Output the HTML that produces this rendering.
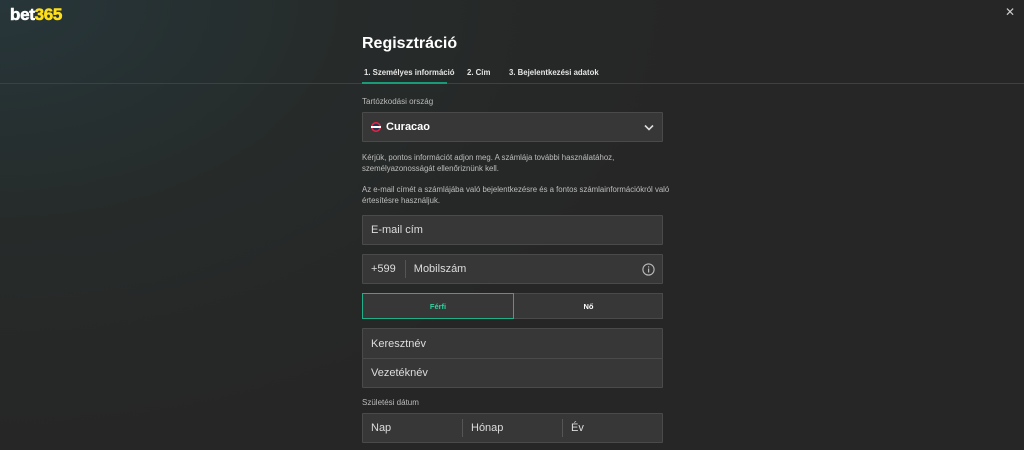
<!DOCTYPE html>
<html><head><meta charset="utf-8"><style>
*{box-sizing:border-box;margin:0;padding:0}
body{width:1024px;height:450px;overflow:hidden;font-family:"Liberation Sans",sans-serif;color:#fff;
background:radial-gradient(ellipse 700px 450px at 0 0,#27363a 0%,#262b2a 50%,#262626 100%);position:relative}
.abs{position:absolute}
.logo{left:10px;top:5px;font-size:17px;font-weight:900;letter-spacing:-0.3px;-webkit-text-stroke:0.6px currentColor}
.logo span{color:#ffdf1b}
.close{right:9px;top:5px;font-size:12px;color:#ccc}
.hline{left:0;right:0;top:83px;height:1px;background:#3c4240}
.title{left:362px;top:35px;font-size:16px;font-weight:bold}
.tab{top:68px;font-size:7.8px;font-weight:bold;color:#e5e5e5}
.ul{left:362px;top:82px;width:85px;height:2px;background:#1b9a78}
.lbl{left:362px;font-size:8px;color:#bbb}
.box{left:362px;width:301px;background:#373737;border:1px solid #4a4a4a;font-size:11px;color:#ddd;display:flex;align-items:center;padding-left:8px;border-radius:1px}
.p{left:362px;font-size:7.8px;color:#bdbdbd;line-height:11px;width:320px}
</style></head><body>
<div class="abs logo">bet<span>365</span></div>
<div class="abs close">✕</div>
<div class="abs hline"></div>
<div class="abs title">Regisztráció</div>
<div class="abs tab" style="left:364px">1. Személyes információ</div>
<div class="abs tab" style="left:467px">2. Cím</div>
<div class="abs tab" style="left:509px">3. Bejelentkezési adatok</div>
<div class="abs ul"></div>
<div class="abs lbl" style="top:97px">Tartózkodási ország</div>
<div class="abs box" style="top:112px;height:30px;font-size:11px;font-weight:bold;color:#fff">
<svg width="10" height="10" style="margin-right:5px"><circle cx="5" cy="5" r="5" fill="#e24"/><circle cx="5" cy="5" r="3.5" fill="#235"/><rect x="0" y="4" width="10" height="2" fill="#fff"/></svg>Curacao
<svg class="abs" style="right:8px;top:11px" width="10" height="7"><path d="M1 1.5 5 5.5 9 1.5" stroke="#ddd" stroke-width="1.6" fill="none"/></svg></div>
<div class="abs p" style="top:152px">Kérjük, pontos információt adjon meg. A számlája további használatához,<br>személyazonosságát ellenőriznünk kell.</div>
<div class="abs p" style="top:184px">Az e-mail címét a számlájába való bejelentkezésre és a fontos számlainformációkról való<br>értesítésre használjuk.</div>
<div class="abs box" style="top:215px;height:30px">E-mail cím</div>
<div class="abs box" style="top:254px;height:30px">+599<span style="display:inline-block;width:1px;height:18px;background:#555;margin:0 8px 0 9px"></span>Mobilszám
<svg class="abs" style="right:7px;top:8px" width="13" height="13"><circle cx="6.5" cy="6.5" r="5.6" stroke="#bbb" stroke-width="1.1" fill="none"/><rect x="6" y="5.5" width="1.2" height="4" fill="#bbb"/><rect x="6" y="3.3" width="1.2" height="1.2" fill="#bbb"/></svg></div>
<div class="abs" style="left:362px;top:293px;width:301px;height:26px;background:#373737;border:1px solid #4a4a4a"></div>
<div class="abs" style="left:362px;top:293px;width:152px;height:26px;border:1.5px solid #1fb08a;font-size:7.5px;font-weight:bold;color:#2ed3a0;display:flex;align-items:center;justify-content:center">Férfi</div>
<div class="abs" style="left:514px;top:293px;width:149px;height:26px;font-size:7.5px;font-weight:bold;display:flex;align-items:center;justify-content:center">Nő</div>
<div class="abs box" style="top:328px;height:31px">Keresztnév</div>
<div class="abs box" style="top:358px;height:30px">Vezetéknév</div>
<div class="abs lbl" style="top:398px">Születési dátum</div>
<div class="abs box" style="top:413px;height:30px;padding-left:0">
<div style="width:100px;padding-left:8px;position:relative">Nap<span class="abs" style="right:0;top:-3px;width:1px;height:18px;background:#555"></span></div>
<div style="width:100px;padding-left:8px;position:relative">Hónap<span class="abs" style="right:0;top:-3px;width:1px;height:18px;background:#555"></span></div>
<div style="padding-left:8px">Év</div></div>
</body></html>
